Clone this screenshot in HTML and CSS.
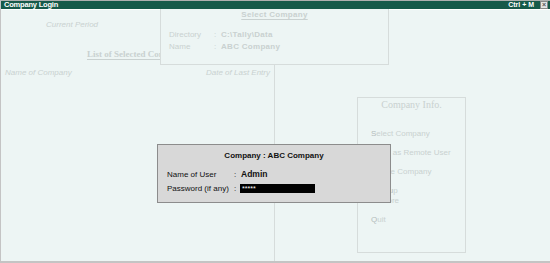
FILE: index.html
```html
<!DOCTYPE html>
<html lang="en">
<head>
    <meta charset="UTF-8">
    <title>Company Login</title>
    <link rel="stylesheet" href="styles.css">
</head>
<body>

    <div class="window">
        <div class="titlebar">
            <span class="title">Company Login</span>
            <span class="shortcut">Ctrl + M</span>
            <span class="close">&#215;</span>
        </div>

        <div class="screen">
            <div class="top">
                <div class="period">Current Period</div>
                <div class="list-head">List of Selected Companies</div>
            </div>

            <div class="main">
                <div class="list">
                    <div class="list-cols">
                        <span>Name of Company</span>
                        <span>Date of Last Entry</span>
                    </div>
                </div>

                <div class="side">
                    <div class="info">
                        <div class="info-title">Company Info.</div>
                        <ul class="menu">
                            <li><b>S</b>elect Company</li>
                            <li><b>L</b>ogin as Remote User</li>
                            <li><b>C</b>reate Company</li>
                            <li>Back<b>u</b>p<br>Restore</li>
                            <li><b>Q</b>uit</li>
                        </ul>
                    </div>
                </div>
            </div>

            <!-- panel drawn over the list header -->
            <div class="select-box">
                <div class="select-title">Select Company</div>
                <div class="row"><span class="lbl">Directory</span><span class="sep">:</span><b>C:\Tally\Data</b></div>
                <div class="row"><span class="lbl">Name</span><span class="sep">:</span><b>ABC Company</b></div>
            </div>

            <div class="dialog">
                <div class="dialog-title">Company : ABC Company</div>
                <div class="field">
                    <span class="flabel">Name of User</span>
                    <span class="fsep">:</span>
                    <b>Admin</b>
                </div>
                <div class="field">
                    <span class="flabel">Password (if any)</span>
                    <span class="fsep">:</span>
                    <span class="password">*****</span>
                </div>
            </div>
        </div>
    </div>

</body>
</html>
```

FILE: styles.css
```css
body {
    margin: 0;
    background-color: #edf5f4;
    font-family: 'Liberation Sans', Arial, sans-serif;
    font-size: 8px;
}

.window {
    width: 550px;
    height: 263px;
    box-sizing: border-box;
    border-left: 1px solid #c4c4c4;
    border-bottom: 2px solid #c4c4c4;
    border-top: 1px solid #b0b0b0;
    display: flex;
    flex-direction: column;
}

.titlebar {
    height: 8px;
    background-color: #175a4a;
    color: #ffffff;
    display: flex;
    align-items: center;
    padding: 0 2px 0 3px;
    border-bottom: 1px solid #ffffff;
    font-weight: bold;
    font-size: 7px;
    line-height: 8px;
}

.title {
    flex: 1;
    font-size: 7.5px;
    letter-spacing: -0.2px;
}

.shortcut {
    margin-right: 6px;
}

.close {
    width: 6px;
    height: 6px;
    background-color: #e4e4e4;
    color: #555;
    border: 1px solid #888;
    font-size: 7px;
    line-height: 6px;
    text-align: center;
}

.screen {
    position: relative;
    flex: 1;
    display: flex;
    flex-direction: column;
    color: #c9d1d0;
}

.top {
    height: 55px;
    position: relative;
}

.period {
    font-style: italic;
    padding: 10px 0 0 45px;
}

.list-head {
    font-family: 'Liberation Serif', 'Times New Roman', serif;
    font-weight: bold;
    font-size: 9px;
    margin: 20px 0 0 86px;
    text-decoration: underline;
    text-underline-offset: 2px;
    white-space: nowrap;
}

.main {
    flex: 1;
    display: flex;
}

.list {
    width: 273px;
    border-right: 1px solid #d6dcdb;
}

.list-cols {
    display: flex;
    justify-content: space-between;
    font-style: italic;
    padding: 3px 4px 0 4px;
}

.side {
    flex: 1;
    padding: 32px 0 0 82px;
}

.info {
    width: 107px;
    height: 154px;
    border: 1px solid #d6dcdb;
}

.info-title {
    font-family: 'Liberation Serif', 'Times New Roman', serif;
    font-size: 10px;
    text-align: center;
    padding-top: 1px;
}

.menu {
    list-style: none;
    margin: 19px 0 0 13px;
    padding: 0;
    line-height: 10px;
}

.menu li {
    margin-bottom: 9px;
}

.menu b {
    font-weight: normal;
    color: #b4bcbb;
}

.select-box {
    position: absolute;
    left: 159px;
    top: -1px;
    width: 227px;
    height: 55px;
    background-color: #edf5f4;
    border: 1px solid #d6dcdb;
    border-top: none;
}

.select-title {
    font-weight: bold;
    text-align: center;
    margin: 1px 0 10px 0;
    text-decoration: underline;
    text-underline-offset: 2px;
    letter-spacing: 0.3px;
}

.row {
    display: flex;
    padding-left: 8px;
    line-height: 12px;
    font-size: 8px;
}

.lbl {
    width: 45px;
}

.sep {
    width: 7px;
}

.row b {
    letter-spacing: 0.3px;
}

.dialog {
    position: absolute;
    left: 156px;
    top: 134px;
    width: 232px;
    height: 57px;
    background-color: #d8d8d8;
    border: 1px solid #8c8c8c;
    color: #111;
}

.dialog-title {
    font-weight: bold;
    text-align: center;
    margin: 6px 0 7px 0;
}

.field {
    display: flex;
    align-items: center;
    height: 14px;
    padding-left: 9px;
}

.flabel {
    width: 67px;
}

.fsep {
    width: 7px;
}

.field b {
    font-size: 8.5px;
}

.password {
    width: 73px;
    height: 9px;
    background-color: #000;
    color: #fff;
    font-size: 7px;
    line-height: 9px;
    padding-left: 2px;
    margin-left: -1px;
    overflow: hidden;
}
```
